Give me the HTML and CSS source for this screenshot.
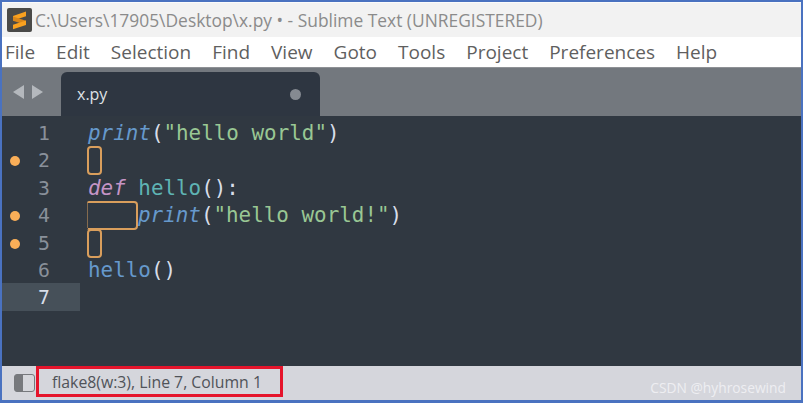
FILE: index.html
```html
<!DOCTYPE html>
<html lang="en">
<head>
<meta charset="utf-8">
<title>x.py - Sublime Text</title>
<link rel="stylesheet" href="styles.css">
</head>
<body>
<div class="window">
  <header class="titlebar">
    <svg class="logo" width="25" height="24" viewBox="0 0 25 24" aria-hidden="true">
      <rect width="25" height="24" rx="2" fill="#4a4a48"/>
      <path d="M19 3.500 6 8v4.500L19 8.200z" fill="#f9a11f"/>
      <path d="M6 8.500 19 12.700v4.300L6 12.800z" fill="#d9861a"/>
      <path d="M19 12.600 6 16.800v4.400L19 17z" fill="#f9a11f"/>
    </svg>
    <span class="title-text">C:\Users\17905\Desktop\x.py • - Sublime Text (UNREGISTERED)</span>
  </header>
  <nav class="menubar">
    <span>File</span><span>Edit</span><span>Selection</span><span>Find</span><span>View</span><span>Goto</span><span>Tools</span><span>Project</span><span>Preferences</span><span>Help</span>
  </nav>
  <div class="tabbar">
    <div class="arrows">
      <svg width="13" height="16" viewBox="0 0 13 16" aria-hidden="true"><path d="M12 1v14L1 8z" fill="#b4b8bd"/></svg>
      <svg width="13" height="16" viewBox="0 0 13 16" aria-hidden="true"><path d="M1 1v14l11-7z" fill="#b4b8bd"/></svg>
    </div>
    <div class="tab">
      <span class="tab-name">x.py</span>
      <span class="tab-dot"></span>
    </div>
  </div>
  <main class="editor">
    <div class="row"><div class="gutter"><span class="num">1</span></div><code class="code"><i class="fn">print</i><b class="p">(</b><b class="s">"hello world"</b><b class="p">)</b></code></div>
    <div class="row"><div class="gutter"><span class="dot"></span><span class="num">2</span></div><code class="code"><span class="lint one"></span></code></div>
    <div class="row"><div class="gutter"><span class="num">3</span></div><code class="code"><i class="kw">def</i> <b class="name">hello</b><b class="p">():</b></code></div>
    <div class="row"><div class="gutter"><span class="dot"></span><span class="num">4</span></div><code class="code"><span class="lint four"></span><i class="fn">print</i><b class="p">(</b><b class="s">"hello world!"</b><b class="p">)</b></code></div>
    <div class="row"><div class="gutter"><span class="dot"></span><span class="num">5</span></div><code class="code"><span class="lint one"></span></code></div>
    <div class="row"><div class="gutter"><span class="num">6</span></div><code class="code"><b class="call">hello</b><b class="p">()</b></code></div>
    <div class="row"><div class="gutter current"><span class="num">7</span></div><code class="code"></code></div>
  </main>
  <footer class="statusbar">
    <svg class="panel-icon" width="21" height="18" viewBox="0 0 21 18" aria-hidden="true">
      <rect x="0.500" y="0.500" width="20" height="17" rx="2.500" fill="#d6d7dc" stroke="#77797d"/>
      <path d="M3 0.500h6v17H3a2.500 2.500 0 0 1-2.500-2.500V3A2.500 2.500 0 0 1 3 .5z" fill="#77797d"/>
    </svg>
    <div class="status-box">flake8(w:3), Line 7, Column 1</div>
    <span class="watermark">CSDN @hyhrosewind</span>
  </footer>
</div>
</body>
</html>
```
FILE: styles.css
```css
* { box-sizing: border-box; }
html, body { margin: 0; padding: 0; }
body { width: 803px; height: 403px; overflow: hidden; background: #4a72c0; }
.window {
  margin: 2px 2px 3px 2px;
  height: 398px;
  display: flex;
  flex-direction: column;
  font-family: "Open Sans", "Noto Sans", sans-serif;
}
.titlebar {
  height: 35px;
  flex: none;
  background: #f2f2f2;
  display: flex;
  align-items: center;
  padding-left: 5px;
  gap: 3px;
  border-top: 1px solid #fbfbfb;
}
.logo { flex: none; }
.title-text { font-size: 17.400px; color: #8b8b8b; white-space: nowrap; }
.menubar {
  height: 30px;
  flex: none;
  background: #fff;
  display: flex;
  align-items: center;
  padding-left: 3px;
  gap: 21px;
  font-size: 19px;
  color: #5f5f5f;
}
.tabbar {
  height: 49px;
  flex: none;
  background: #73787e;
  border-top: 1px solid #8e9195;
  display: flex;
  align-items: flex-end;
  padding-left: 10px;
}
.arrows { width: 49px; height: 44px; display: flex; gap: 6px; align-items: center; padding-bottom: 5px; }
.tab {
  width: 259px;
  height: 44px;
  background: #2e3641;
  border-radius: 6px 6px 0 0;
  display: flex;
  align-items: center;
  justify-content: space-between;
  padding: 0 19px 0 16px;
}
.tab-name { font-size: 16px; color: #dfe2e6; }
.tab-dot { width: 11px; height: 11px; border-radius: 50%; background: #858a91; }
.editor { flex: 1; background: #303841; padding-top: 3px; min-height: 0; }
.row { height: 27.400px; display: flex; }
.gutter {
  width: 78px;
  flex: none;
  display: flex;
  align-items: flex-start;
  position: relative;
  padding-right: 30px;
  justify-content: flex-end;
}
.gutter.current { background: #465059; }
.num { font: 19.800px/29px "DejaVu Sans Mono", monospace; color: #89909a; }
.current .num { color: #d8dee9; }
.dot {
  position: absolute;
  left: 8px;
  top: 10px;
  width: 10px;
  height: 10px;
  border-radius: 50%;
  background: #f9ae58;
}
.code {
  margin-left: 8px;
  font: 20.900px/29px "DejaVu Sans Mono", monospace;
  color: #d8dee9;
  white-space: pre;
  display: block;
  height: 27.400px;
}
.code b { font-weight: normal; }
.fn { color: #6699cc; font-style: italic; }
.kw { color: #c594c5; font-style: italic; }
.name { color: #5fb4b4; }
.call { color: #6699cc; }
.s { color: #99c794; }
.p { color: #d8dee9; }
.lint {
  display: inline-block;
  height: 29px;
  margin-left: -1px;
  border: 2px solid #d99e5c;
  border-radius: 4px;
  vertical-align: top;
}
.lint.one { width: 15px; }
.lint.four { width: 51px; border-left: 1px dotted #d99e5c; border-radius: 2px 4px 4px 2px; }
.statusbar {
  height: 34px;
  flex: none;
  background: #d5d6dc;
  display: flex;
  align-items: flex-start;
  padding-left: 12px;
  position: relative;
}
.panel-icon { margin-top: 8px; flex: none; }
.status-box {
  width: 247px;
  height: 31px;
  margin-left: 1px;
  border: 3px solid #e5142b;
  font-size: 15.800px;
  color: #505359;
  padding-left: 13px;
  line-height: 27px;
  white-space: nowrap;
}
.watermark {
  position: absolute;
  right: 15px;
  top: 12px;
  font-size: 13.800px;
  color: #eeeef2;
  white-space: nowrap;
}
```
